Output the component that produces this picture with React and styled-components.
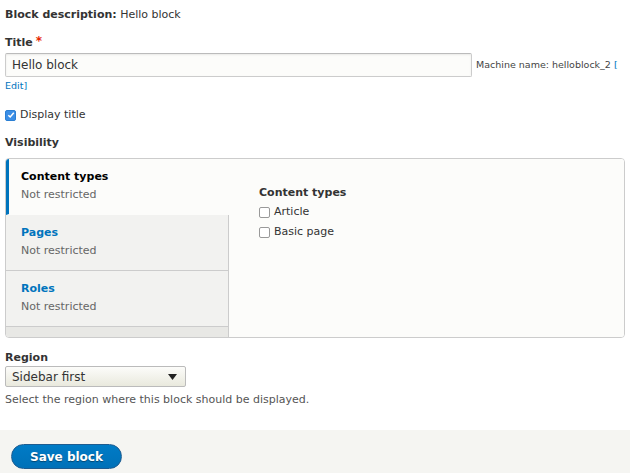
import React from "react";
import styled, { createGlobalStyle } from "styled-components";

const GlobalStyle = createGlobalStyle`
  html, body {
    margin: 0;
    padding: 0;
    background: #fff;
  }
  body {
    font-family: "DejaVu Sans", "Liberation Sans", sans-serif;
    font-size: 11px;
    color: #333;
  }
`;

const Page = styled.div`
  display: flex;
  flex-direction: column;
`;

const Form = styled.div`
  padding: 6px 5px 0 5px;
`;

const Description = styled.div`
  line-height: 18px;
  margin-bottom: 10px;
  strong {
    font-weight: bold;
    color: #333;
  }
`;

const Label = styled.label`
  display: block;
  font-weight: bold;
  color: #333;
  line-height: 14px;
  margin-bottom: ${(p) => (p.$mb != null ? p.$mb : 3)}px;
`;

const Required = styled.span`
  color: #e62600;
  font-size: 12px;
  margin-left: 3px;
  vertical-align: 1px;
`;

const TitleRow = styled.div`
  line-height: 22px;
`;

const EditRow = styled.div`
  line-height: 12px;
  margin: 3px 0 15px;
`;

const TextInput = styled.input`
  box-sizing: border-box;
  width: 467px;
  height: 24px;
  padding: 0 6px;
  font: inherit;
  font-size: 12px;
  color: #333;
  background: #fcfcfa;
  border: 1px solid #ccc;
  border-top-color: #bbb;
  border-radius: 2px;
  box-shadow: inset 0 1px 2px rgba(0, 0, 0, 0.08);
  vertical-align: middle;
`;

const MachineName = styled.span`
  font-size: 9.5px;
  color: #444;
  margin-left: 4px;
  vertical-align: middle;
`;

const Link = styled.a`
  color: #0074bd;
  text-decoration: none;
  font-size: 9.5px;
`;

const CheckRow = styled.label`
  display: flex;
  align-items: center;
  gap: 4px;
  line-height: 16px;
  color: #333;
  margin-bottom: ${(p) => p.$mb || 0}px;
`;

const Box = styled.span`
  box-sizing: border-box;
  width: 11px;
  height: 11px;
  border-radius: 2px;
  display: inline-flex;
  align-items: center;
  justify-content: center;
  border: 1px solid ${(p) => (p.$checked ? "#2b7fd3" : "#999")};
  background: ${(p) => (p.$checked ? "#3b8ee6" : "#fff")};
`;

const VTabs = styled.div`
  display: flex;
  border: 1px solid #ccc;
  border-radius: 4px;
  height: 180px;
  box-sizing: border-box;
  overflow: hidden;
  margin: 8px 0 13px;
`;

const Menu = styled.div`
  width: 222px;
  flex-shrink: 0;
  background: #e8e8e5;
  border-right: 1px solid #ccc;
  display: flex;
  flex-direction: column;
`;

const TabItem = styled.div`
  height: 56px;
  box-sizing: border-box;
  padding: 9px 12px 0 ${(p) => (p.$active ? 12 : 15)}px;
  background: ${(p) => (p.$active ? "#fcfcfa" : "#f2f2f0")};
  border-left: ${(p) => (p.$active ? "3px solid #0074bd" : "none")};
  border-bottom: 1px solid ${(p) => (p.$active ? "transparent" : "#ccc")};
  margin-right: ${(p) => (p.$active ? -1 : 0)}px;
  position: relative;
  line-height: 18px;
`;

const TabTitle = styled.div`
  font-weight: bold;
  color: ${(p) => (p.$active ? "#000" : "#0074bd")};
`;

const TabSummary = styled.div`
  color: #666;
`;

const Pane = styled.div`
  flex: 1;
  background: #fcfcfa;
  padding: 26px 0 0 30px;
`;

const PaneTitle = styled.div`
  font-weight: bold;
  color: #333;
  line-height: 16px;
  margin-bottom: 3px;
`;

const Select = styled.div`
  box-sizing: border-box;
  width: 181px;
  height: 21px;
  display: flex;
  align-items: center;
  justify-content: space-between;
  padding: 0 8px 0 6px;
  font-size: 12px;
  color: #333;
  background: linear-gradient(#fcfcfa, #e9e9dd);
  border: 1px solid #bbb;
  border-radius: 2px;
  margin-bottom: 5px;
`;

const Help = styled.div`
  color: #555;
  line-height: 16px;
  margin-bottom: 22px;
`;

const Actions = styled.div`
  background: #f5f5f2;
  padding: 14px 11px 14px;
`;

const Button = styled.button`
  width: 111px;
  height: 25px;
  border-radius: 13px;
  border: 1px solid #1e5c90;
  background: linear-gradient(#007bc6, #0071b8);
  color: #fff;
  font: inherit;
  font-size: 12px;
  font-weight: bold;
  text-shadow: 0 1px 1px rgba(0, 0, 0, 0.4);
`;

function Check({ checked }) {
  return (
    <Box $checked={checked}>
      {checked && (
        <svg width="8" height="8" viewBox="0 0 8 8">
          <path d="M1.3 4.2 L3.2 6 L6.8 1.8" fill="none" stroke="#fff" strokeWidth="1.5" />
        </svg>
      )}
    </Box>
  );
}

const tabs = [
  { title: "Content types", active: true },
  { title: "Pages" },
  { title: "Roles" },
];

export default function App() {
  return (
    <Page>
      <GlobalStyle />
      <Form>
        <Description>
          <strong>Block description:</strong> Hello block
        </Description>
        <Label>
          Title<Required>*</Required>
        </Label>
        <TitleRow>
          <TextInput defaultValue="Hello block" />
          <MachineName>
            Machine name: helloblock_2 <Link href="#">[</Link>
          </MachineName>
        </TitleRow>
        <EditRow>
          <Link href="#">Edit]</Link>
        </EditRow>
        <CheckRow $mb={13}>
          <Check checked />
          Display title
        </CheckRow>
        <Label>Visibility</Label>
        <VTabs>
          <Menu>
            {tabs.map((t) => (
              <TabItem key={t.title} $active={t.active}>
                <TabTitle $active={t.active}>{t.title}</TabTitle>
                <TabSummary>Not restricted</TabSummary>
              </TabItem>
            ))}
          </Menu>
          <Pane>
            <PaneTitle>Content types</PaneTitle>
            <CheckRow $mb={4}>
              <Check />
              Article
            </CheckRow>
            <CheckRow>
              <Check />
              Basic page
            </CheckRow>
          </Pane>
        </VTabs>
        <Label $mb={1}>Region</Label>
        <Select>
          Sidebar first
          <svg width="9" height="6" viewBox="0 0 9 6">
            <path d="M0 0 H9 L4.5 6 Z" fill="#222" />
          </svg>
        </Select>
        <Help>Select the region where this block should be displayed.</Help>
      </Form>
      <Actions>
        <Button>Save block</Button>
      </Actions>
    </Page>
  );
}
